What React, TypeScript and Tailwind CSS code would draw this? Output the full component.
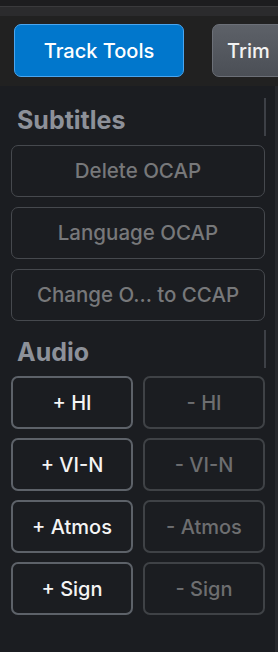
import React from 'react';

const subtitleActions = ['Delete OCAP', 'Language OCAP', 'Change O... to CCAP'];
const audioActions = ['HI', 'VI-N', 'Atmos', 'Sign'];

const SectionHeader = ({ title }: { title: string }) => (
    <div className="flex h-[38px] items-start justify-between">
        <span className="pl-[6px] pt-[10px] text-[25px] font-bold leading-[25px] text-[#8d9199]">{title}</span>
        <div className="h-full w-[2px] bg-[#3d4046]" />
    </div>
);

const App = () => {
    return (
        <div className="flex h-[652px] w-[278px] flex-col overflow-hidden bg-[#1b1d21] font-['Inter',sans-serif]">
            <div className="h-[6px] bg-[#1d1d1f]" />
            <div className="h-[1px] bg-[#3a3a3c]" />
            <div className="h-[9px] bg-[#2b2b2d]" />

            <div className="flex h-[70px] items-start gap-[28px] bg-[#212121] pl-[14px] pt-[8px]">
                <button className="h-[53px] w-[170px] shrink-0 rounded-[7px] border border-[#4aa6f0] bg-[#0177cc] text-[20px] font-medium text-white">
                    Track Tools
                </button>
                <button className="h-[53px] w-[120px] shrink-0 rounded-[7px] border border-[#6c7078] bg-gradient-to-b from-[#5d6168] to-[#4b4f56] pl-[14px] text-left text-[20px] font-medium text-[#f2f2f2]">
                    Trim
                </button>
            </div>

            <div className="flex flex-1">
                <div className="flex w-[266px] flex-col pl-[11px]">
                    <div className="mt-[12px] mb-[9px]">
                        <SectionHeader title="Subtitles" />
                    </div>
                    <div className="flex flex-col gap-[10px]">
                        {subtitleActions.map((label) => (
                            <button key={label} className="h-[52px] w-[254px] rounded-[7px] border border-[#46494e] text-[20.5px] font-medium text-[#77787a]">
                                {label}
                            </button>
                        ))}
                    </div>

                    <div className="mt-[9px] mb-[8px]">
                        <SectionHeader title="Audio" />
                    </div>
                    <div className="grid grid-cols-[122px_122px] gap-x-[10px] gap-y-[9px]">
                        {audioActions.map((label) => (
                            <React.Fragment key={label}>
                                <button className="h-[53px] rounded-[7px] border-2 border-[#5d6269] text-[20px] font-medium text-[#f4f4f4]">
                                    + {label}
                                </button>
                                <button className="h-[53px] rounded-[7px] border-2 border-[#3f4246] text-[20px] font-medium text-[#6d6e70]">
                                    - {label}
                                </button>
                            </React.Fragment>
                        ))}
                    </div>
                </div>
                <div className="w-[9px]" />
                <div className="w-[3px] bg-[#26282c]" />
            </div>
        </div>
    );
};

export default App;
